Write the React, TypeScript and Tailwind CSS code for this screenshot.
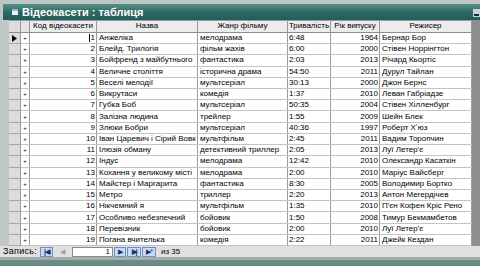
import React from "react";

const rows: [string, string, string, string, string, string][] = [
  ["1", "Анжеліка", "мелодрама", "6:48", "1964", "Бернар Бор"],
  ["2", "Блейд. Трилогія", "фільм жахів", "6:00", "2000", "Стівен Норрінгтон"],
  ["3", "Бойфренд з майбутнього", "фантастика", "2:03", "2013", "Річард Кьортіс"],
  ["4", "Величне століття", "історична драма", "54:50", "2011", "Дурул Тайлан"],
  ["5", "Веселі мелодії", "мультсеріал", "30:13", "2000", "Джон Бернс"],
  ["6", "Викрутаси", "комедія", "1:37", "2010", "Леван Габріадзе"],
  ["7", "Губка Боб", "мультсеріал", "50:35", "2004", "Стівен Хілленбург"],
  ["8", "Залізна людина", "трейлер", "1:55", "2009", "Шейн Блек"],
  ["9", "Злюки Бобри", "мультсеріал", "40:36", "1997", "Роберт Хʼюз"],
  ["10", "Іван Царевич і Сірий Вовк", "мультфільм", "2:45", "2011", "Вадим Торопчин"],
  ["11", "Ілюзія обману", "детективний триллер", "2:05", "2013", "Луї Летер'є"],
  ["12", "Індус", "мелодрама", "12:42", "2010", "Олександр Касаткін"],
  ["13", "Кохання у великому місті", "мелодрама", "2:00", "2010", "Маріус Вайсберг"],
  ["14", "Майстер і Маргарита", "фантастика", "8:30", "2005", "Володимир Бортко"],
  ["15", "Метро", "триллер", "2:20", "2013", "Антон Мегердічев"],
  ["16", "Нікчемний я", "мультфільм", "1:35", "2010", "П'єн Кофен Кріс Рено"],
  ["17", "Особливо небезпечний", "бойовик", "1:50", "2008", "Тимур Бекмамбетов"],
  ["18", "Перевізник", "бойовик", "2:00", "2010", "Луї Летер'є"],
  ["19", "Погана вчителька", "комедія", "2:22", "2011", "Джейк Кездан"],
];

function NavBtn({ children, disabled }: { children: React.ReactNode; disabled?: boolean }) {
  return (
    <div
      className={
        disabled
          ? "h-[10px] flex items-center justify-center text-[#a0a0a0]"
          : "h-[10px] flex items-center justify-center bg-[#c9d9f2] border border-[#6f8fc4] text-[#13306a]"
      }
    >
      {children}
    </div>
  );
}

export default function App() {
  return (
    <div className="w-[480px] h-[266px] overflow-hidden bg-[#bcc5c1] flex flex-col font-['Liberation_Sans',Arial,sans-serif] text-black">
      {/* title bar */}
      <div className="mt-[4px] ml-[3px] h-[16px] flex items-center bg-gradient-to-b from-[#5a918a] via-[#2d6a63] to-[#225c56] relative">
        <div className="ml-[9px] w-[6px] h-[6px] bg-[#eef2f4] border-t-2 border-[#9bb3d6]" />
        <span className="ml-[4px] text-[11px] font-bold text-white leading-none">Відеокасети : таблиця</span>
        <div className="absolute right-0 top-[5px] w-[7px] h-[8px] bg-[#c9d3d3] flex items-end justify-center pb-[1px]">
          <div className="w-[5px] h-[2px] bg-[#1a2a3a]" />
        </div>
      </div>

      {/* datasheet */}
      <div className="flex h-[226px]">
        <div className="w-[9px] bg-[#c0c8c5]" />
        <div className="w-[463px] bg-white flex flex-col text-[8px] leading-none">
          {/* header */}
          <div className="flex h-[11px] bg-[#ececec] border-b border-[#8c8c8c] box-content border-t border-t-[#9a9a9a]">
            <div className="w-[12px] bg-[#dcdcdc] border-r border-[#9a9a9a]" />
            <div className="w-[9px] bg-[#e4e4e4] border-r border-[#9a9a9a]" />
            <div className="w-[67px] border-r border-[#9a9a9a] flex items-center justify-center whitespace-nowrap overflow-hidden">Код відеокасети</div>
            <div className="w-[101px] border-r border-[#9a9a9a] flex items-center justify-center">Назва</div>
            <div className="w-[90px] border-r border-[#9a9a9a] flex items-center justify-center">Жанр фільму</div>
            <div className="w-[43px] border-r border-[#9a9a9a] flex items-center justify-center whitespace-nowrap overflow-hidden">Тривалість</div>
            <div className="w-[49px] border-r border-[#9a9a9a] flex items-center justify-center whitespace-nowrap">Рік випуску</div>
            <div className="w-[92px] border-r border-[#9a9a9a] flex items-center justify-center">Режисер</div>
          </div>
          {rows.map((r, i) => (
            <div key={r[0]} className="flex h-[11.3px] border-b border-[#c4c4c4] whitespace-nowrap">
              <div className="w-[12px] bg-[#dcdcdc] border-r border-[#9a9a9a] border-b border-b-[#a8a8a8] -mb-px flex items-center justify-center">
                {i === 0 && (
                  <svg width="5" height="7" viewBox="0 0 5 7">
                    <polygon points="0,0 5,3.5 0,7" fill="#000" />
                  </svg>
                )}
              </div>
              <div className="w-[9px] border-r border-[#9a9a9a] flex items-center justify-center text-[6px]">+</div>
              <div className="w-[67px] border-r border-[#9a9a9a] flex items-center justify-end pr-[1px]">
                {i === 0 && <span className="w-px h-[8px] bg-black mr-px" />}
                {r[0]}
              </div>
              <div className="w-[101px] border-r border-[#9a9a9a] flex items-center pl-[2px] overflow-hidden">{r[1]}</div>
              <div className="w-[90px] border-r border-[#9a9a9a] flex items-center pl-[2px] overflow-hidden">{r[2]}</div>
              <div className="w-[43px] border-r border-[#9a9a9a] flex items-center pl-[1px] overflow-hidden">{r[3]}</div>
              <div className="w-[49px] border-r border-[#9a9a9a] flex items-center justify-end pr-[1px]">{r[4]}</div>
              <div className="w-[92px] border-r border-[#9a9a9a] flex items-center pl-[2px] overflow-hidden">{r[5]}</div>
            </div>
          ))}
        </div>
        <div className="flex-1 bg-[#8e8e8e]" />
      </div>

      {/* navigation bar */}
      <div className="h-[11px] bg-[#e0e0e0] flex items-center text-[8px] leading-none pl-[3px]">
        <span className="w-[37px] text-[9px] tracking-[0.3px]">Запись:</span>
        <div className="w-[13px]"><NavBtn><span className="text-[7px] font-bold tracking-[-1px]">|◀</span></NavBtn></div>
        <div className="w-[11px] ml-[4px]"><NavBtn disabled><span className="text-[7px]">◀</span></NavBtn></div>
        <div className="ml-[4px] w-[41px] h-[10px] bg-white border border-[#8a8a8a] flex items-center justify-end pr-[2px]">1</div>
        <div className="w-[12px] ml-[1px]"><NavBtn><span className="text-[7px]">▶</span></NavBtn></div>
        <div className="w-[14px] ml-[1px]"><NavBtn><span className="text-[7px] font-bold tracking-[-1px]">▶|</span></NavBtn></div>
        <div className="w-[14px] ml-[1px]"><NavBtn><span className="text-[7px] tracking-[-1px]">▶*</span></NavBtn></div>
        <span className="ml-[5px]">из 35</span>
      </div>
      <div className="h-[3px] bg-[#a6aeab]" />
      <div className="flex-1 bg-[#6a8c87]" />
    </div>
  );
}
